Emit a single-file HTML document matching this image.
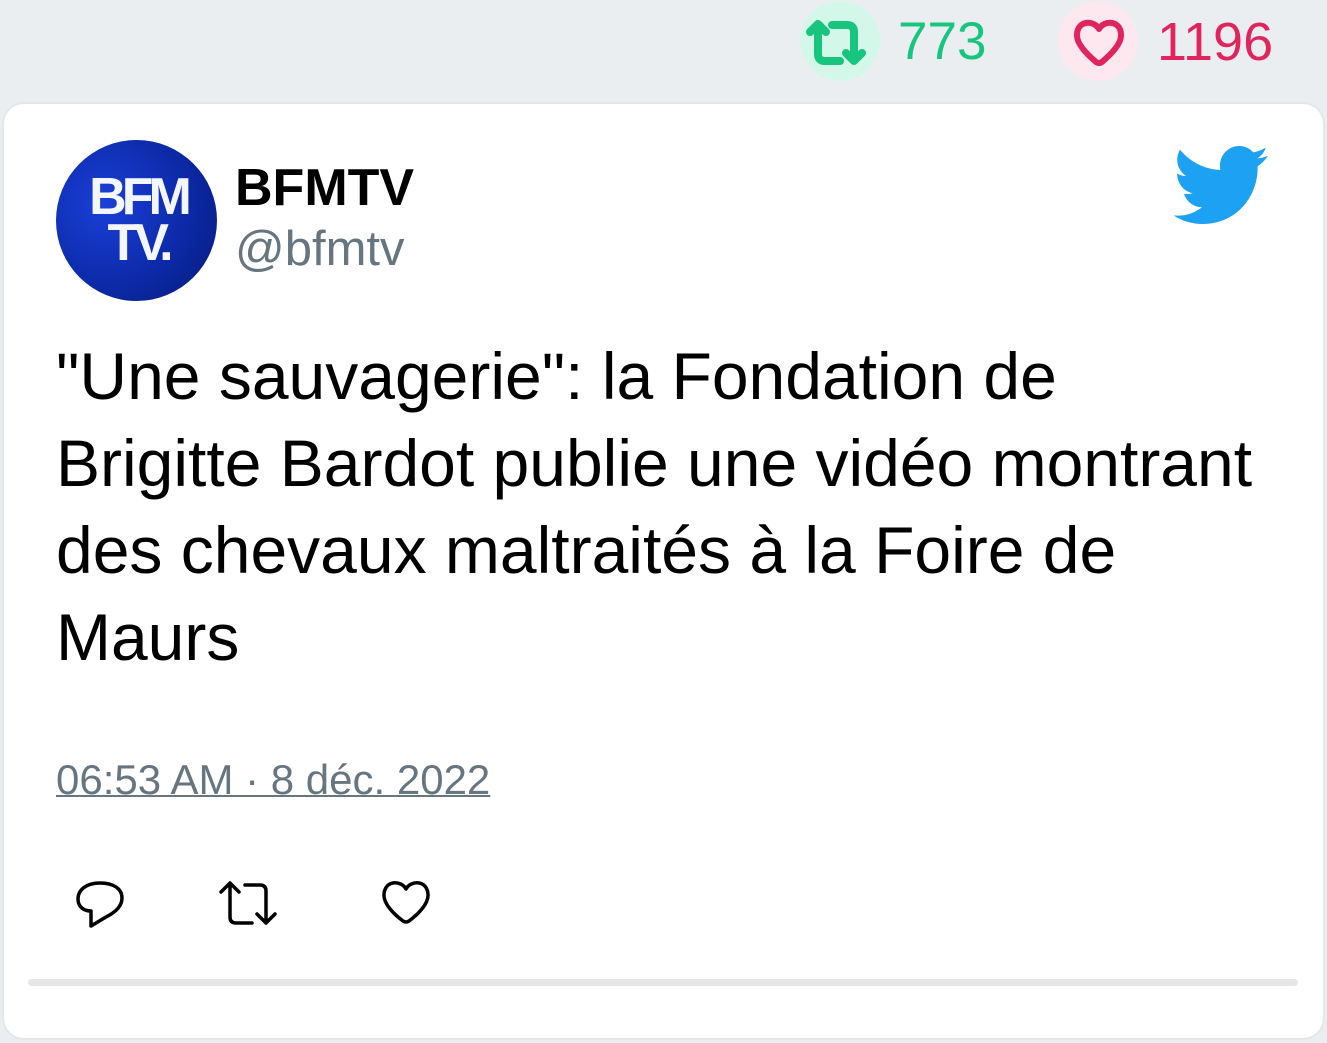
<!DOCTYPE html>
<html><head><meta charset="utf-8"><style>
html,body{margin:0;padding:0;width:1327px;height:1043px;overflow:hidden;background:#ebeef0;font-family:"Liberation Sans",sans-serif;}
.card{position:absolute;left:2px;top:102px;width:1319px;height:934px;background:#fff;border:2px solid #e4e6e8;border-radius:22px;}
.abs{position:absolute;white-space:nowrap;}
</style></head><body>
<div class="abs" style="left:800px;top:1px;width:80px;height:80px;border-radius:50%;background:#d3f8e9;"></div>
<svg class="abs" style="left:806px;top:20px" width="66" height="46" viewBox="0 0 66 46" fill="none" stroke="#17c57f" stroke-width="8" stroke-linecap="round" stroke-linejoin="round"><path d="M4 12 L12 4 L20 12 M12 5 V34 Q12 41 19 41 H34 M26 5 H41 Q48 5 48 12 V40 M40 33 L48 41 L56 33"/></svg>
<div class="abs" style="left:898px;top:11px;font-size:53px;color:#17c57f;">773</div>
<div class="abs" style="left:1058px;top:1px;width:80px;height:80px;border-radius:50%;background:#fde8ef;"></div>
<svg class="abs" style="left:1072px;top:18px" width="54" height="48" viewBox="0 0 54 48"><path d="M27 11 C22 2 6 2 5 16 C4 26 16 37 24 44 Q27 46 30 44 C38 37 50 26 49 16 C48 2 32 2 27 11 Z" fill="none" stroke="#e0245e" stroke-width="6" stroke-linejoin="round"/></svg>
<div class="abs" style="left:1157px;top:11px;font-size:54px;color:#e0245e;">1196</div>

<div class="card"></div>
<div class="abs" style="left:56px;top:140px;width:161px;height:161px;border-radius:50%;background:radial-gradient(circle at 30% 40%,#1a3fd8,#0c2aa8 55%,#071a78);"></div>
<div class="abs" style="left:80px;top:174px;width:116px;text-align:center;color:#f4f6ff;font-weight:bold;font-size:52px;line-height:46px;letter-spacing:-5px;">BFM<br>TV.</div>
<div class="abs" style="left:235px;top:158px;font-size:52px;font-weight:bold;color:#000;">BFMTV</div>
<div class="abs" style="left:235px;top:221px;font-size:49px;color:#66757f;">@bfmtv</div>
<svg class="abs" style="left:1174px;top:146px" width="96" height="80" viewBox="0 0 24 20"><path fill="#1da1f2" d="M23.6 2.4c-.9.4-1.8.6-2.8.7 1-.6 1.8-1.5 2.1-2.7-.9.6-2 1-3.1 1.2C19 .6 17.7 0 16.3 0c-2.7 0-4.8 2.2-4.8 4.9 0 .4 0 .8.1 1.1C7.5 5.8 3.9 3.9 1.5.9c-.4.7-.7 1.6-.7 2.5 0 1.700.9 3.2 2.2 4.1-.8 0-1.500-.2-2.200-.6v.1c0 2.400 1.700 4.400 3.900 4.800-.4.1-.8.2-1.300.2-.3 0-.6 0-.9-.1.6 2 2.400 3.400 4.500 3.400-1.700 1.300-3.700 2.100-6 2.100-.4 0-.8 0-1.200-.1 2.100 1.400 4.700 2.200 7.400 2.200 8.900 0 13.700-7.400 13.700-13.800v-.6c1-.7 1.800-1.500 2.500-2.500z"/></svg>

<div class="abs" style="left:56px;top:333px;font-size:66px;line-height:87px;color:#000;">"Une sauvagerie": la Fondation de<br>Brigitte Bardot publie une vidéo montrant<br>des chevaux maltraités à la Foire de<br>Maurs</div>

<div class="abs" style="left:56px;top:756px;font-size:42px;color:#66757f;text-decoration:underline;text-decoration-thickness:2px;">06:53 AM · 8 déc. 2022</div>

<svg class="abs" style="left:74px;top:878px" width="52" height="52" viewBox="0 0 52 52" fill="none" stroke="#000" stroke-width="3.5" stroke-linejoin="round"><path d="M26 5 C12 5 4 12 4 21 C4 29 10 33 17 33 V48 L32 39 C40 35 48 29 48 20 C48 11 40 5 26 5 Z"/></svg>
<svg class="abs" style="left:218px;top:880px" width="66" height="48" viewBox="0 0 66 48" fill="none" stroke="#000" stroke-width="3.5" stroke-linecap="round" stroke-linejoin="round"><path d="M3 12 L12 3 L21 12 M12 4 V37 Q12 43 18 43 H34 M27 5 H42 Q48 5 48 11 V43 M39 34 L48 43 L57 34"/></svg>
<svg class="abs" style="left:380px;top:878px" width="52" height="48" viewBox="0 0 52 48"><path d="M26 11 C21 2 5 2 4 16 C3 26 15 37 23 43 Q26 45 29 43 C37 37 49 26 48 16 C47 2 31 2 26 11 Z" fill="none" stroke="#000" stroke-width="3.5" stroke-linejoin="round"/></svg>

<div class="abs" style="left:28px;top:979px;width:1270px;height:7px;border-radius:4px;background:#e6e6e6;"></div>
</body></html>
